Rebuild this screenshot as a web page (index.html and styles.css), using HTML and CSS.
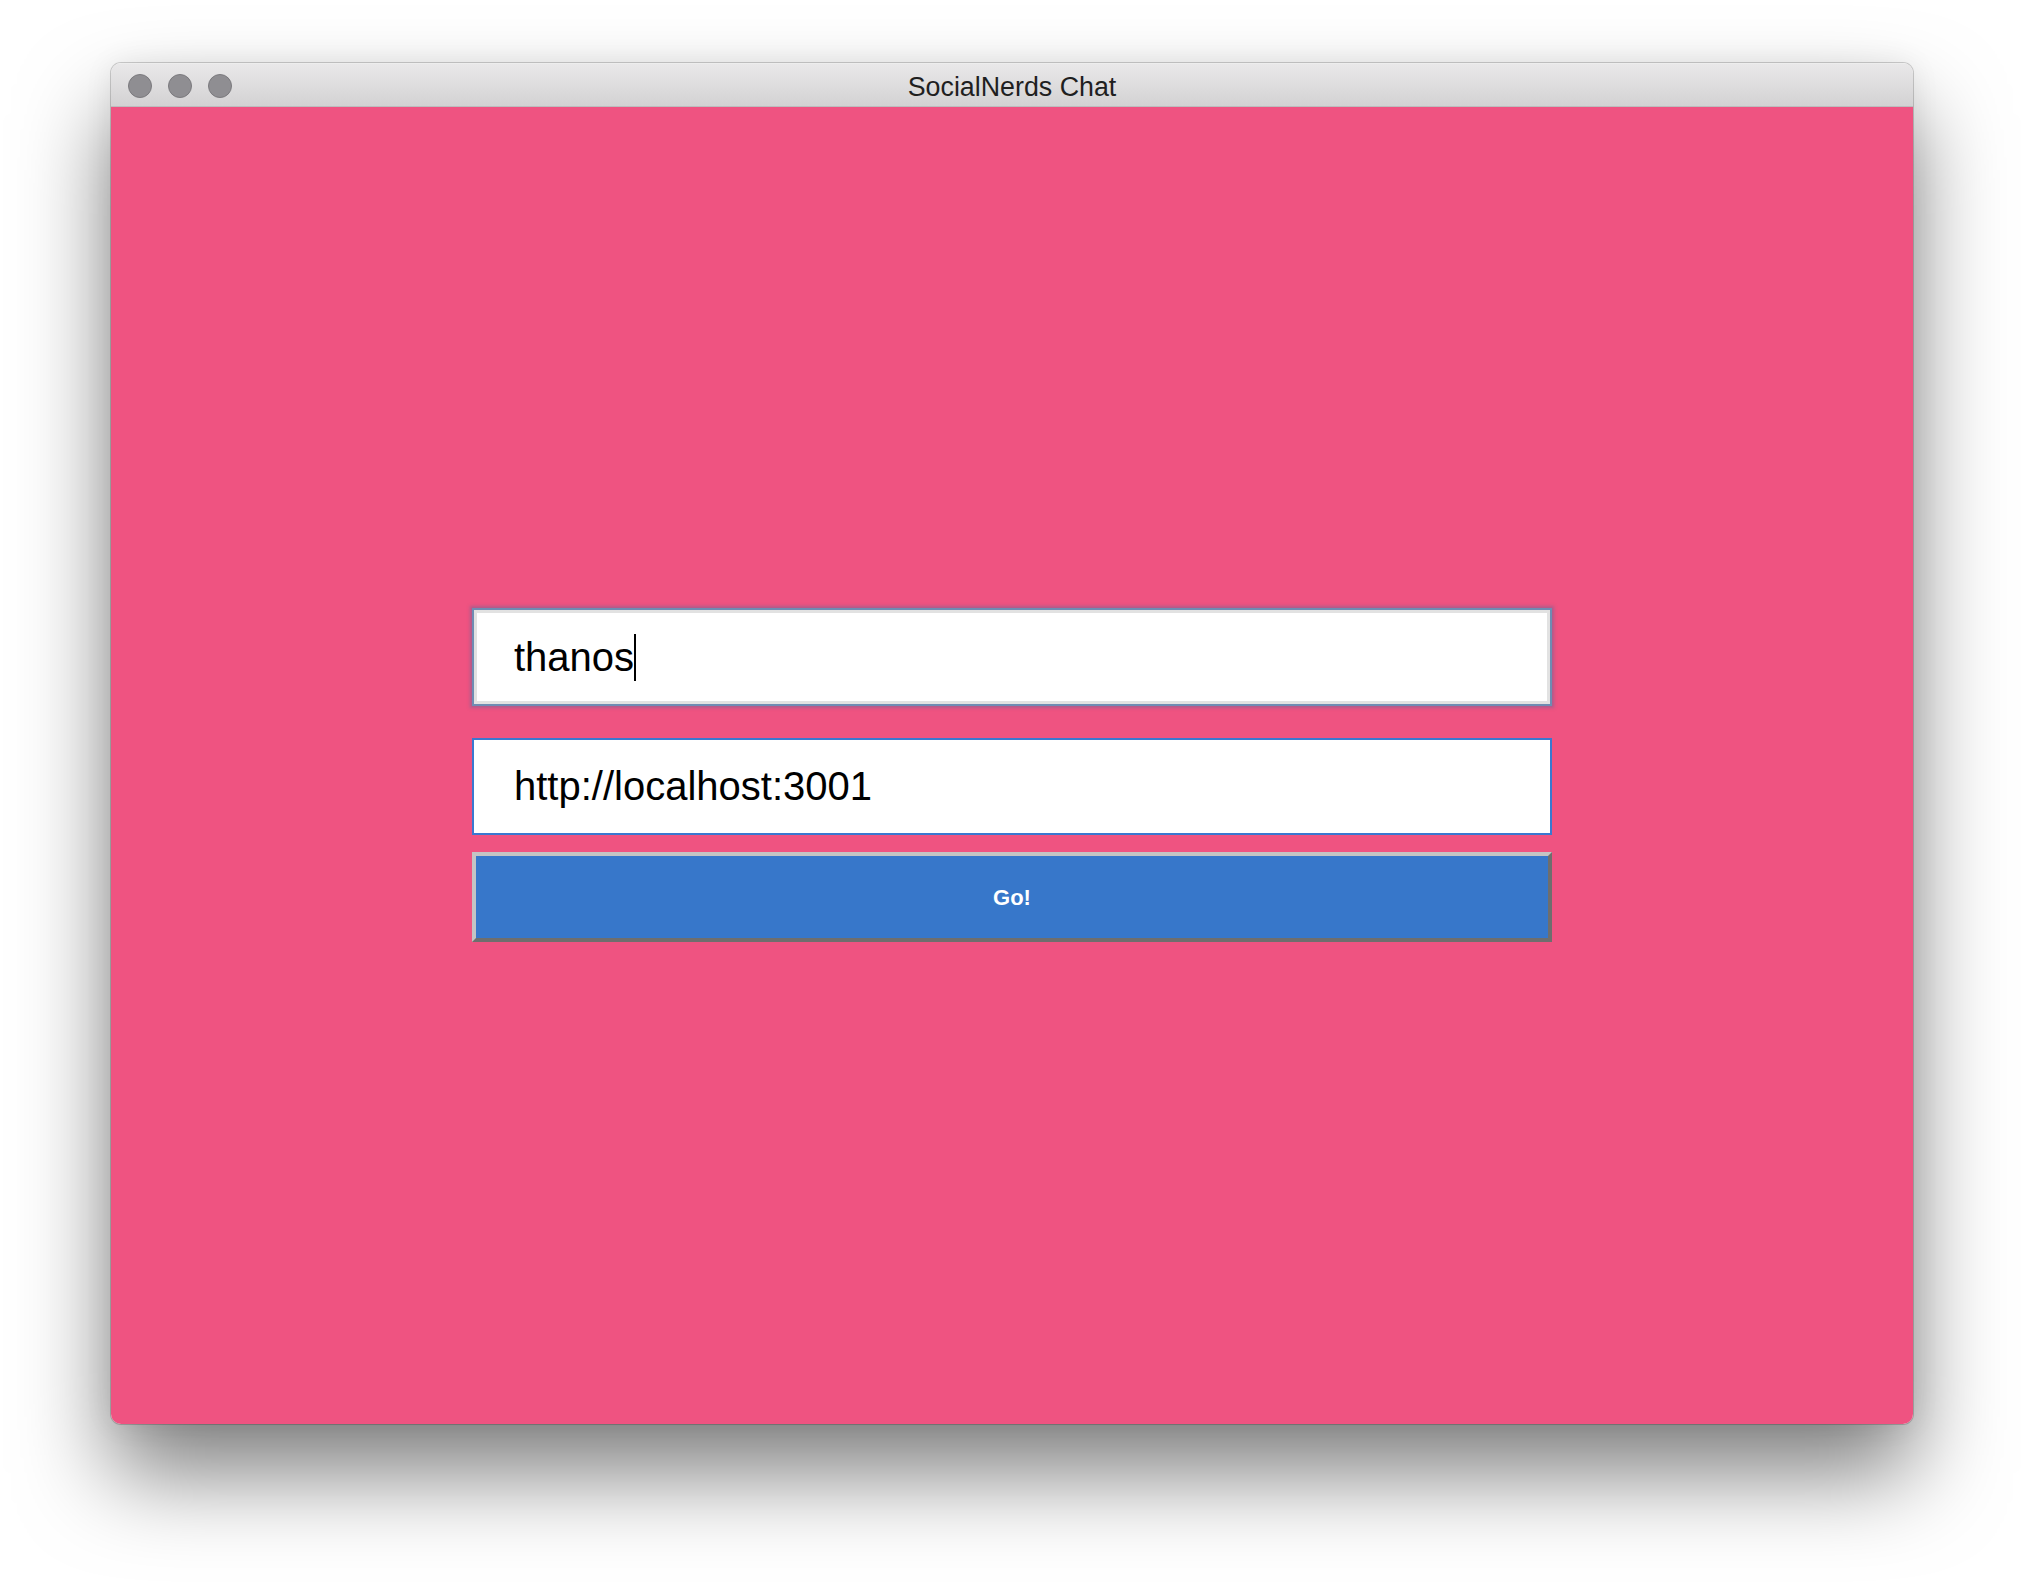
FILE: index.html
```html
<!DOCTYPE html>
<html lang="en">
<head>
<meta charset="utf-8">
<title>SocialNerds Chat</title>
<link rel="stylesheet" href="styles.css">
</head>
<body>
  <div class="window">
    <header class="titlebar">
      <div class="lights">
        <span class="light"></span>
        <span class="light"></span>
        <span class="light"></span>
      </div>
      <div class="title">SocialNerds Chat</div>
      <div class="spacer"></div>
    </header>
    <main class="content">
      <form class="login">
        <div class="field focused"><span class="value">thanos</span><span class="caret"></span></div>
        <div class="field url"><span class="value">http://localhost:3001</span></div>
        <div class="go">Go!</div>
      </form>
    </main>
  </div>
</body>
</html>
```
FILE: styles.css
```css
html, body {
  margin: 0;
  padding: 0;
  background: #ffffff;
  width: 2024px;
  height: 1584px;
  overflow: hidden;
  font-family: "Liberation Sans", Arial, sans-serif;
}

.window {
  margin: 63px 0 0 111px;
  width: 1802px;
  height: 1361px;
  box-sizing: border-box;
  border-radius: 10px;
  overflow: hidden;
  display: flex;
  flex-direction: column;
  box-shadow: 0 0 0 1px rgba(0, 0, 0, 0.18),
              0 50px 90px rgba(0, 0, 0, 0.5),
              0 0 30px rgba(0, 0, 0, 0.07);
}

.titlebar {
  height: 44px;
  flex: 0 0 44px;
  box-sizing: border-box;
  border-top: 1px solid #ededed;
  border-bottom: 1px solid #bdbcbd;
  background: linear-gradient(#e9e8e9, #d3d2d3);
  display: grid;
  grid-template-columns: 1fr auto 1fr;
  align-items: center;
}

.lights {
  display: flex;
  gap: 16px;
  padding-left: 17px;
  padding-top: 2px;
}

.light {
  width: 24px;
  height: 24px;
  box-sizing: border-box;
  border-radius: 50%;
  background: #8f8e92;
  border: 1px solid #7b7a7e;
}

.title {
  font-size: 26.8px;
  color: #1f1f1f;
  line-height: 30px;
  padding-top: 4px;
}

.content {
  flex: 1;
  background: #ef5381;
  padding-top: 501px;
}

.login {
  width: 1080px;
  margin: 0 auto;
  display: flex;
  flex-direction: column;
}

.field {
  height: 98px;
  box-sizing: border-box;
  background: #ffffff;
  display: flex;
  align-items: center;
  padding-left: 40px;
  font-size: 40px;
  color: #000000;
  border: 2px solid #3a78d0;
}

.field.focused {
  border-color: #6f8cb3;
  box-shadow: 0 0 3px 2px rgba(110, 100, 150, 0.5), inset 0 0 0 3px #e2e2e2;
  margin-bottom: 32px;
}

.field.url {
  height: 97px;
  margin-bottom: 17px;
}

.caret {
  display: inline-block;
  width: 2px;
  height: 47px;
  background: #000000;
}

.go {
  height: 90px;
  box-sizing: border-box;
  background: #3777ca;
  border-style: solid;
  border-width: 4px;
  border-color: #c4c4c4 #6e6e6e #6e6e6e #c4c4c4;
  color: #ffffff;
  font-weight: bold;
  font-size: 22px;
  padding-top: 2px;
  display: flex;
  align-items: center;
  justify-content: center;
}
```
